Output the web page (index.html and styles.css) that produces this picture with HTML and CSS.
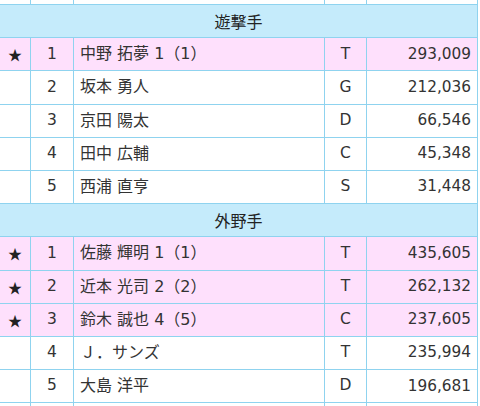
FILE: index.html
```html
<!DOCTYPE html>
<html lang="ja">
<head>
<meta charset="utf-8">
<title>投票結果</title>
<link rel="stylesheet" href="styles.css">
</head>
<body>
<table class="rank">
  <colgroup>
    <col class="c-mark"><col class="c-no"><col class="c-name"><col class="c-pos"><col class="c-votes">
  </colgroup>
  <tbody>
    <tr class="edge-top"><td></td><td></td><td></td><td></td><td></td></tr>
    <tr class="section"><th colspan="5">遊撃手</th></tr>
    <tr class="sel"><td class="mark">★</td><td class="no">1</td><td class="name">中野 拓夢 1（1）</td><td class="pos">T</td><td class="votes">293,009</td></tr>
    <tr><td class="mark"></td><td class="no">2</td><td class="name">坂本 勇人</td><td class="pos">G</td><td class="votes">212,036</td></tr>
    <tr><td class="mark"></td><td class="no">3</td><td class="name">京田 陽太</td><td class="pos">D</td><td class="votes">66,546</td></tr>
    <tr><td class="mark"></td><td class="no">4</td><td class="name">田中 広輔</td><td class="pos">C</td><td class="votes">45,348</td></tr>
    <tr><td class="mark"></td><td class="no">5</td><td class="name">西浦 直亨</td><td class="pos">S</td><td class="votes">31,448</td></tr>
    <tr class="section"><th colspan="5">外野手</th></tr>
    <tr class="sel"><td class="mark">★</td><td class="no">1</td><td class="name">佐藤 輝明 1（1）</td><td class="pos">T</td><td class="votes">435,605</td></tr>
    <tr class="sel"><td class="mark">★</td><td class="no">2</td><td class="name">近本 光司 2（2）</td><td class="pos">T</td><td class="votes">262,132</td></tr>
    <tr class="sel"><td class="mark">★</td><td class="no">3</td><td class="name">鈴木 誠也 4（5）</td><td class="pos">C</td><td class="votes">237,605</td></tr>
    <tr><td class="mark"></td><td class="no">4</td><td class="name">Ｊ．サンズ</td><td class="pos">T</td><td class="votes">235,994</td></tr>
    <tr><td class="mark"></td><td class="no">5</td><td class="name">大島 洋平</td><td class="pos">D</td><td class="votes">196,681</td></tr>
    <tr class="edge-bottom"><td></td><td></td><td></td><td></td><td></td></tr>
  </tbody>
</table>
</body>
</html>
```

FILE: styles.css
```css
html, body {
  margin: 0;
  padding: 0;
  background: #ffffff;
  overflow: hidden;
  height: 406px;
}

.rank {
  border-collapse: collapse;
  table-layout: fixed;
  width: 478px;
  margin-left: -1px;
  font-family: "DejaVu Sans", "Noto Sans CJK JP", sans-serif;
  font-size: 16px;
  color: #333333;
}

.c-mark { width: 31px; }
.c-no { width: 43px; }
.c-name { width: 251px; }
.c-pos { width: 42px; }
.c-votes { width: 111px; }

.rank td,
.rank th {
  border: 1px solid #8fd3ef;
  height: 33.2px;
  padding: 0 6px;
  box-sizing: border-box;
  vertical-align: middle;
  white-space: nowrap;
  overflow: hidden;
  line-height: 1;
}

.rank .edge-top td {
  height: 4.5px;
  border-top: 0;
}

.rank .edge-bottom td {
  height: 10px;
  border-bottom: 0;
}

.section th {
  background: #c5ebfb;
  font-weight: normal;
  text-align: center;
  color: #222222;
  font-family: "Noto Sans CJK JP", sans-serif;
}

.sel td {
  background: #fee0fc;
}

.mark {
  text-align: center;
  font-family: "Noto Sans CJK JP", sans-serif;
  font-size: 14px;
  color: #222222;
  padding: 0;
}

.no,
.pos {
  text-align: center;
  font-size: 15.5px;
}

.name {
  text-align: left;
}

.votes {
  text-align: right;
  font-size: 15.3px;
}
```
